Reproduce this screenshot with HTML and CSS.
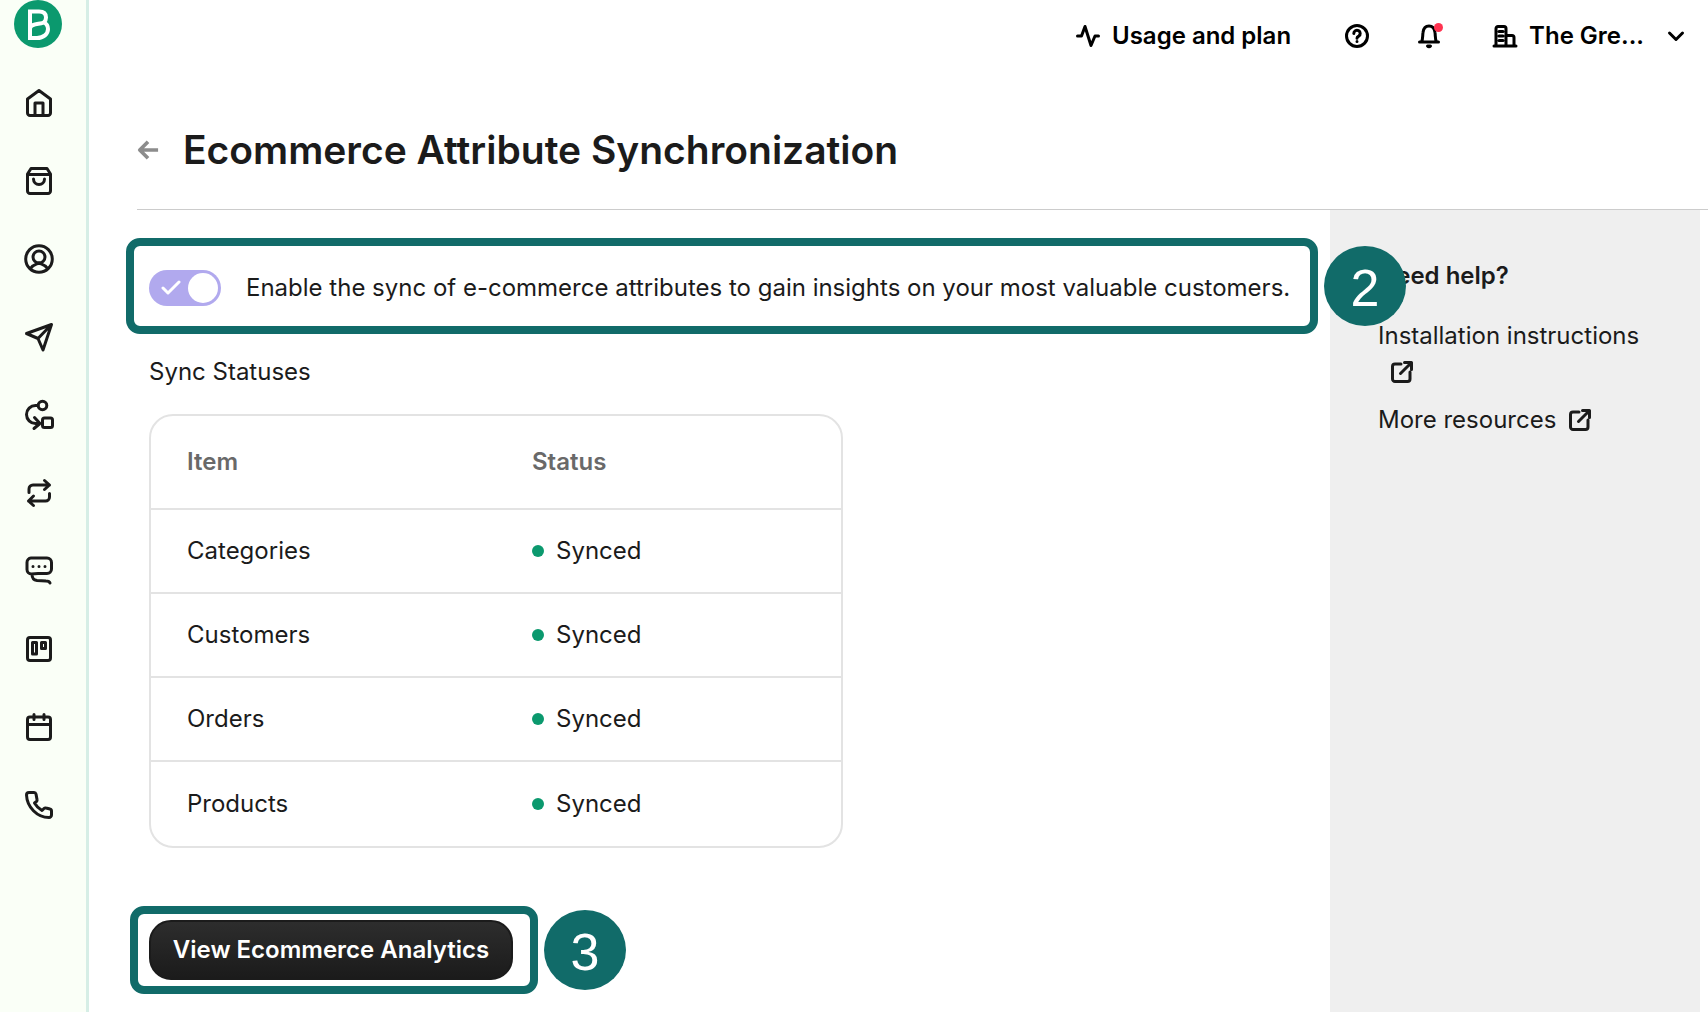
FILE: index.html
```html
<!DOCTYPE html>
<html lang="en">
<head>
    <meta charset="UTF-8">
    <meta name="viewport" content="width=device-width, initial-scale=1.0">
    <title>Ecommerce Attribute Synchronization</title>
    <link rel="stylesheet" href="styles.css">
</head>
<body>
    <nav class="sidebar" aria-label="Main">
        <a class="logo" href="#" aria-label="Brevo">
            <svg viewBox="0 0 48 48" width="48" height="48">
                <circle cx="24" cy="24" r="24" fill="#0b996e"/>
                <path d="M16 11.500V38H23C29.500 38 34 34 34 29C34 26 33 24 30 22.500C31.500 21 32 19.500 32 17.500C32 13.500 29.500 11.500 25 11.500ZM16 28.500C16.500 22.500 29 25 30.500 21.500" fill="none" stroke="#fff" stroke-width="4"/>
            </svg>
        </a>
        <a class="nav-link" href="#" aria-label="Home">
            <svg class="icon" viewBox="0 0 32 32"><path d="M4.500 12 16 3.500 27.500 12V26a2.500 2.500 0 0 1-2.500 2.500H7A2.500 2.500 0 0 1 4.500 26ZM12 28V16h8v12"/></svg>
        </a>
        <a class="nav-link" href="#" aria-label="Commerce">
            <svg class="icon" viewBox="0 0 32 32"><path d="M4.500 9 8 3.500h16L27.500 9v17a2.500 2.500 0 0 1-2.500 2.500H7A2.500 2.500 0 0 1 4.500 26ZM4.500 9.500h23M10.500 14a5.500 5.500 0 0 0 11 0"/></svg>
        </a>
        <a class="nav-link" href="#" aria-label="Contacts">
            <svg class="icon" viewBox="0 0 32 32"><circle cx="16" cy="16" r="13.300"/><circle cx="16" cy="14" r="6"/><path d="M7.500 25.500C10 21.500 12.500 21.500 16 20c3.500 1.500 6 1.500 8.500 5.500"/></svg>
        </a>
        <a class="nav-link" href="#" aria-label="Campaigns">
            <svg class="icon" viewBox="0 0 32 32"><path d="M3.500 12.500 28.500 3.500 20 29 15 17.500ZM15 17.500 28.500 3.500"/></svg>
        </a>
        <a class="nav-link" href="#" aria-label="Automations">
            <svg class="icon" viewBox="0 0 32 32"><circle cx="19.500" cy="6.500" r="4.300"/><rect x="19.500" y="19" width="10" height="9.500" rx="2"/><path d="M15 6.500h-2.500a9 9 0 0 0 0 18H17M11.500 18.500l5.500 6-6 5"/></svg>
        </a>
        <a class="nav-link" href="#" aria-label="Transactional">
            <svg class="icon" viewBox="0 0 32 32"><path d="M6 15.500V12a4 4 0 0 1 4-4h16.500M21.500 3.500 26.500 8l-5 4.500M26.500 16.500V20a4 4 0 0 1-4 4H5.500M10.500 28.500 5.500 24l5-5"/></svg>
        </a>
        <a class="nav-link" href="#" aria-label="Conversations">
            <svg class="icon" viewBox="0 0 32 32"><path d="M8 3h16a4.500 4.500 0 0 1 4.500 4.500v6.500a4.500 4.500 0 0 1-4.500 4.500H15L8.500 19A4.500 4.500 0 0 1 4 14.500V7.500A4.500 4.500 0 0 1 8 3ZM9 19C9 23.500 10.500 25 14 25.500l9 .500c2 0 3.500.500 4 2"/><path class="dots" d="M10 11.500h0M16 11.500h0M22 11.500h0"/></svg>
        </a>
        <a class="nav-link" href="#" aria-label="Deals">
            <svg class="icon" viewBox="0 0 32 32"><rect x="4.500" y="4.500" width="23" height="23" rx="2.500"/><path d="M9.500 9.500h4v11.500H9.500ZM18.500 9.500h4v6h-4Z"/></svg>
        </a>
        <a class="nav-link" href="#" aria-label="Meetings">
            <svg class="icon" viewBox="0 0 32 32"><rect x="4.500" y="6" width="23" height="22.500" rx="2.500"/><path d="M4.500 13.500h23M11 3.500v5M21 3.500v5"/></svg>
        </a>
        <a class="nav-link" href="#" aria-label="Phone">
            <svg class="icon" viewBox="0 0 32 32"><path d="M6 3.500h5a2 2 0 0 1 2 1.500l1 5.500a2 2 0 0 1-.500 2L11.500 14c2 3.500 4 5.500 7.500 7.500l2-2c.500-.500 1.300-.700 2-.500l4 1c1 .200 1.500 1 1.500 2v4a2.500 2.500 0 0 1-2.500 2.500C14 28.500 4 18 3.500 6A2.500 2.500 0 0 1 6 3.500Z"/></svg>
        </a>
    </nav>

    <div class="page">
        <header class="topbar">
            <a class="topbar-item usage" href="#">
                <svg class="icon-sm" viewBox="0 0 24 24"><path d="M1.500 12h4L9 2.500l6 19L19 12h3.500"/></svg>
                Usage and plan
            </a>
            <button class="topbar-item" type="button" aria-label="Help">
                <svg class="icon-sm" viewBox="0 0 24 24"><circle cx="12" cy="12" r="10.500"/><path d="M8.800 9.500a3.200 3.200 0 1 1 5 2.600C12.500 12.900 12 13.200 12 14.200M12 17.500h0"/></svg>
            </button>
            <button class="topbar-item" type="button" aria-label="Notifications">
                <svg class="icon-sm" viewBox="0 0 24 24"><path d="M2.500 18h19M4.500 18C6 15.500 5.500 12 6 8.500 6.500 4 9 2 12 2s5.500 2 6 6.500c.500 3.500 0 7 1.500 9.500"/><path d="M10.500 22a2 2 0 0 0 3 0Z"/><circle class="alert" cx="21.500" cy="3.500" r="4.500"/></svg>
            </button>
            <button class="topbar-item account" type="button">
                <svg class="icon-sm" viewBox="0 0 24 24"><path d="M1 22h22M3 22V4.500A2 2 0 0 1 5 2.500h6a2 2 0 0 1 2 2V22M13 11.500h6a2 2 0 0 1 2 2V22M6 7.500h4M6 12h4M6 16.500h4"/></svg>
                The Gre...
                <svg class="icon-sm chevron" viewBox="0 0 24 24"><path d="m5.500 9 6.500 6.500L18.500 9"/></svg>
            </button>
        </header>

        <div class="title-row">
            <a class="back" href="#" aria-label="Back">
                <svg viewBox="0 0 24 24" width="24" height="24"><path d="M23 12H4M12 3l-9 9 9 9"/></svg>
            </a>
            <h1>Ecommerce Attribute Synchronization</h1>
        </div>

        <div class="content">
            <main class="main">
                <div class="callout">
                    <label class="toggle">
                        <input type="checkbox" checked>
                        <span class="track">
                            <svg viewBox="0 0 20 16" width="20" height="16"><path d="m2 8 5 5L18 2"/></svg>
                            <span class="knob"></span>
                        </span>
                        <span>Enable the sync of e-commerce attributes to gain insights on your most valuable customers.</span>
                    </label>
                    <span class="step">2</span>
                </div>

                <h2>Sync Statuses</h2>
                <table class="status-table">
                    <thead>
                        <tr><th>Item</th><th>Status</th></tr>
                    </thead>
                    <tbody>
                        <tr><td>Categories</td><td><span class="status">Synced</span></td></tr>
                        <tr><td>Customers</td><td><span class="status">Synced</span></td></tr>
                        <tr><td>Orders</td><td><span class="status">Synced</span></td></tr>
                        <tr><td>Products</td><td><span class="status">Synced</span></td></tr>
                    </tbody>
                </table>

                <div class="callout callout-action">
                    <button class="btn" type="button">View Ecommerce Analytics</button>
                    <span class="step">3</span>
                </div>
            </main>

            <aside class="help">
                <h3>Need help?</h3>
                <a href="#">Installation instructions<svg class="external" viewBox="0 0 24 24"><path d="M11 4H5a2.500 2.500 0 0 0-2.500 2.500V19A2.500 2.500 0 0 0 5 21.500h12.500A2.500 2.500 0 0 0 20 19v-7M14.500 2.500h7v7M21 3 10.500 13.500"/></svg></a>
                <a href="#">More resources<svg class="external" viewBox="0 0 24 24"><path d="M11 4H5a2.500 2.500 0 0 0-2.500 2.500V19A2.500 2.500 0 0 0 5 21.500h12.500A2.500 2.500 0 0 0 20 19v-7M14.500 2.500h7v7M21 3 10.500 13.500"/></svg></a>
            </aside>
        </div>
    </div>
</body>
</html>
```
FILE: styles.css
```css
* {
    box-sizing: border-box;
}

body {
    margin: 0;
    min-height: 100vh;
    display: flex;
    font-family: Inter, "Liberation Sans", sans-serif;
    font-size: 24px;
    line-height: 36px;
    color: #1b1b1b;
    background: #fff;
}

a {
    color: inherit;
    text-decoration: none;
}

button {
    font: inherit;
    color: inherit;
    border: none;
    background: none;
    padding: 0;
    cursor: pointer;
}

svg {
    display: block;
    flex: none;
    fill: none;
    stroke: currentColor;
    stroke-linecap: round;
    stroke-linejoin: round;
}

/* sidebar */
.sidebar {
    flex: none;
    width: 89px;
    display: flex;
    flex-direction: column;
    gap: 46px;
    padding-left: 23px;
    background: #fafff7;
    border-right: 3px solid #d6eee6;
}

.logo {
    height: 41px;
    margin-left: -9px;
}

.logo svg {
    stroke: none;
    stroke-linejoin: miter;
}

.icon {
    width: 32px;
    height: 32px;
    stroke-width: 3;
}

/* top bar */
.page {
    flex: 1;
    min-width: 0;
    display: flex;
    flex-direction: column;
}

.topbar {
    display: flex;
    justify-content: flex-end;
    gap: 48px;
    padding: 18px 20px 0 0;
    font-weight: 600;
    color: #000;
}

.topbar-item {
    display: flex;
    align-items: center;
    gap: 12px;
}

.usage {
    margin-right: 6px;
}

.account {
    padding-left: 4px;
}

.icon-sm {
    width: 24px;
    height: 24px;
    stroke-width: 3;
    overflow: visible;
}

.alert {
    fill: #ff3350;
    stroke: none;
}

.chevron {
    margin-left: 8px;
}

/* title */
.title-row {
    display: flex;
    align-items: center;
    gap: 24px;
    margin: 70px 0 0 48px;
    padding: 2px 0 35px;
    border-bottom: 1px solid #ccc;
}

.back {
    color: #8c8c8c;
}

.back svg {
    width: 22px;
    stroke-width: 4;
    stroke-linecap: butt;
}

h1 {
    margin: 0;
    font-size: 39px;
    line-height: 48px;
    font-weight: 600;
}

/* content */
.content {
    flex: 1;
    display: flex;
    padding: 0 8px 0 37px;
}

.main {
    flex: 1;
    padding: 28px 12px 17px 0;
}

.callout {
    position: relative;
    border: 8px solid #116b69;
    border-radius: 14px;
    padding: 24px 15px 20px;
}

.step {
    position: absolute;
    left: calc(100% + 14px);
    top: 0;
    width: 82px;
    height: 80px;
    border-radius: 50%;
    background: #116b69;
    color: #fff;
    font: 52px/84px "Liberation Sans", sans-serif;
    text-align: center;
}

.toggle {
    display: flex;
    align-items: center;
    gap: 25px;
    min-height: 36px;
    white-space: nowrap;
    cursor: pointer;
}

.toggle input {
    position: absolute;
    opacity: 0;
}

.track {
    display: flex;
    flex: none;
    align-items: center;
    justify-content: space-between;
    width: 72px;
    height: 36px;
    padding: 0 3px 0 12px;
    border-radius: 18px;
    background: #b1a9ee;
    color: #fff;
}

.track svg {
    stroke-width: 3;
}

.knob {
    width: 30px;
    height: 30px;
    border-radius: 50%;
    background: #fff;
}

h2 {
    margin: 20px 0 24px 23px;
    font-size: 24px;
    line-height: 36px;
    font-weight: 400;
}

.status-table {
    width: 694px;
    margin-left: 23px;
    table-layout: fixed;
    border: 2px solid #e3e3e3;
    border-radius: 24px;
    border-spacing: 0;
}

.status-table th,
.status-table td {
    height: 84px;
    padding: 0 36px;
    text-align: left;
}

.status-table th {
    height: 94px;
    font-weight: 600;
    color: #696969;
}

.status-table th,
.status-table tr:not(:last-child) td {
    border-bottom: 2px solid #e3e3e3;
}

.status {
    display: flex;
    align-items: center;
    gap: 12px;
}

.status::before {
    content: "";
    width: 12px;
    height: 12px;
    border-radius: 50%;
    background: #0b996e;
}

.callout-action {
    width: 408px;
    margin: 58px 0 0 4px;
    padding: 6px 11px;
}

.callout-action .step {
    top: -4px;
}

.btn {
    display: block;
    width: 364px;
    height: 60px;
    border: 2px solid #1b1b1b;
    border-radius: 22px;
    background: linear-gradient(#2d2d2d, #1b1b1b);
    color: #fff;
    font-weight: 600;
}

/* help panel */
.help {
    flex: none;
    width: 370px;
    padding: 48px;
    background: #efefef;
}

.help h3 {
    margin: 0 0 24px;
    font-size: 24px;
    line-height: 36px;
    font-weight: 600;
}

.help a {
    display: block;
    margin-bottom: 12px;
}

.external {
    display: inline-block;
    width: 24px;
    height: 24px;
    margin-left: 12px;
    vertical-align: -4px;
    stroke-width: 3;
}
```
